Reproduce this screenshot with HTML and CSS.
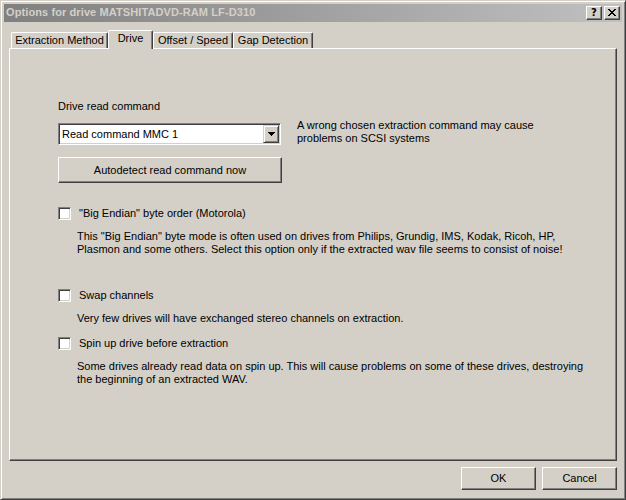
FILE: index.html
```html
<!DOCTYPE html>
<html>
<head>
<meta charset="utf-8">
<title>Options</title>
<link rel="stylesheet" href="styles.css">
</head>
<body>
<div class="window">
  <div class="titlebar">
    <span class="title">Options for drive MATSHITADVD-RAM LF-D310</span>
    <div class="tb-buttons">
      <span class="tb-btn help">?</span>
      <span class="tb-btn close">
        <svg width="8" height="7" viewBox="0 0 8 7" shape-rendering="crispEdges">
          <rect x="0" y="0" width="2" height="1"/><rect x="6" y="0" width="2" height="1"/>
          <rect x="1" y="1" width="2" height="1"/><rect x="5" y="1" width="2" height="1"/>
          <rect x="2" y="2" width="4" height="1"/>
          <rect x="3" y="3" width="2" height="1"/>
          <rect x="2" y="4" width="4" height="1"/>
          <rect x="1" y="5" width="2" height="1"/><rect x="5" y="5" width="2" height="1"/>
          <rect x="0" y="6" width="2" height="1"/><rect x="6" y="6" width="2" height="1"/>
        </svg>
      </span>
    </div>
  </div>
  <div class="dialog">
    <div class="tabs">
      <div class="tab tab-extraction">Extraction Method</div>
      <div class="tab tab-drive selected">Drive</div>
      <div class="tab tab-offset">Offset / Speed</div>
      <div class="tab tab-gap">Gap Detection</div>
    </div>
    <div class="panel">
      <div class="label">Drive read command</div>
      <div class="cmd-row">
        <div class="cmd-left">
          <div class="combo">
            <span class="combo-text">Read command MMC 1</span>
            <span class="combo-btn">
              <svg width="7" height="4" viewBox="0 0 7 4" shape-rendering="crispEdges">
                <rect x="0" y="0" width="7" height="1"/>
                <rect x="1" y="1" width="5" height="1"/>
                <rect x="2" y="2" width="3" height="1"/>
                <rect x="3" y="3" width="1" height="1"/>
              </svg>
            </span>
          </div>
          <div class="button autodetect">Autodetect read command now</div>
        </div>
        <div class="hint">A wrong chosen extraction command may cause<br>problems on SCSI systems</div>
      </div>

      <div class="check-row cb-endian"><span class="checkbox"></span><span class="check-label">"Big Endian" byte order (Motorola)</span></div>
      <div class="desc desc-endian">This "Big Endian" byte mode is often used on drives from Philips, Grundig, IMS, Kodak, Ricoh, HP,<br>Plasmon and some others. Select this option only if the extracted wav file seems to consist of noise!</div>

      <div class="check-row cb-swap"><span class="checkbox"></span><span class="check-label">Swap channels</span></div>
      <div class="desc desc-swap">Very few drives will have exchanged stereo channels on extraction.</div>

      <div class="check-row cb-spin"><span class="checkbox"></span><span class="check-label">Spin up drive before extraction</span></div>
      <div class="desc desc-spin">Some drives already read data on spin up. This will cause problems on some of these drives, destroying<br>the beginning of an extracted WAV.</div>
    </div>
    <div class="actions">
      <div class="button action">OK</div>
      <div class="button action">Cancel</div>
    </div>
  </div>
</div>
</body>
</html>
```

FILE: styles.css
```css
* { box-sizing: border-box; }
html, body { margin: 0; padding: 0; }
body {
  background: #d4d0c8;
  font-family: "Liberation Sans", Arial, sans-serif;
  font-size: 11px;
  line-height: 13px;
  color: #000;
}
.window {
  width: 626px;
  height: 500px;
  border: 1px solid;
  border-color: #d4d0c8 #404040 #404040 #d4d0c8;
  box-shadow: inset 1px 1px #fff, inset -1px -1px #808080;
  padding: 3px;
  background: #d4d0c8;
}
.titlebar {
  height: 18px;
  display: flex;
  justify-content: space-between;
  align-items: flex-start;
  padding: 2px 2px 0 2px;
  background: linear-gradient(to right, #808080, #c0c0c0);
}
.title {
  font-weight: bold;
  color: #d4d0c8;
  line-height: 12px;
  letter-spacing: 0.1px;
  white-space: nowrap;
}
.tb-buttons { display: flex; }
.tb-btn {
  width: 16px;
  height: 14px;
  background: #d4d0c8;
  border-top: 1px solid #fff;
  border-left: 1px solid #fff;
  border-right: 1px solid #404040;
  border-bottom: 1px solid #404040;
  box-shadow: inset -1px -1px #808080;
  display: flex;
  align-items: center;
  justify-content: center;
}
.help {
  margin-right: 2px;
  font-family: "DejaVu Sans", sans-serif;
  font-weight: bold;
  font-size: 10px;
  line-height: 10px;
  padding-bottom: 1px;
}
.close svg { display: block; fill: #000; margin-right: 1px; margin-bottom: 1px; }

.dialog { padding: 8px 5px 0 5px; }
.tabs {
  display: flex;
  align-items: flex-end;
  height: 18px;
  padding-left: 2px;
  position: relative;
  z-index: 1;
}
.tab {
  height: 16px;
  border-top: 1px solid #fff;
  border-left: 1px solid #fff;
  border-right: 1px solid #404040;
  box-shadow: inset -1px 0 #808080;
  border-radius: 2px 2px 0 0;
  text-align: center;
  padding-top: 1px;
  white-space: nowrap;
  background: #d4d0c8;
}
.tab-extraction { width: 97px; }
.tab-drive { width: 45px; }
.tab-offset { width: 80px; }
.tab-gap { width: 80px; }
.tab.selected {
  height: 19px;
  margin-bottom: -1px;
}

.panel {
  height: 413px;
  border-top: 1px solid #fff;
  border-left: 1px solid #fff;
  border-right: 1px solid #404040;
  border-bottom: 1px solid #404040;
  box-shadow: inset -1px -1px #808080;
  padding: 51px 0 0 48px;
}
.label { margin-bottom: 10px; }
.cmd-row { display: flex; align-items: flex-start; }
.cmd-left {
  width: 224px;
  display: flex;
  flex-direction: column;
  gap: 12px;
}
.combo {
  width: 223px;
  height: 22px;
  background: #fff;
  border: 1px solid;
  border-color: #808080 #fff #fff #808080;
  box-shadow: inset 1px 1px #404040, inset -1px -1px #d4d0c8;
  padding: 1px 1px 1px 3px;
  display: flex;
  align-items: center;
  justify-content: space-between;
}
.combo-text { white-space: nowrap; }
.combo-btn {
  width: 16px;
  height: 18px;
  background: #d4d0c8;
  border: 1px solid;
  border-color: #d4d0c8 #404040 #404040 #d4d0c8;
  box-shadow: inset 1px 1px #fff, inset -1px -1px #808080;
  display: flex;
  align-items: center;
  justify-content: center;
}
.combo-btn svg { display: block; fill: #000; }
.button {
  background: #d4d0c8;
  border-top: 1px solid #fff;
  border-left: 1px solid #fff;
  border-right: 1px solid #404040;
  border-bottom: 1px solid #404040;
  box-shadow: inset -1px -1px #808080;
  display: flex;
  align-items: center;
  justify-content: center;
  white-space: nowrap;
}
.autodetect { width: 224px; height: 26px; }
.hint { margin-left: 15px; margin-top: -4px; white-space: nowrap; }

.check-row {
  display: flex;
  align-items: flex-start;
  gap: 8px;
  height: 13px;
}
.checkbox {
  width: 13px;
  height: 13px;
  flex: none;
  background: #fff;
  border: 1px solid;
  border-color: #808080 #fff #fff #808080;
  box-shadow: inset 1px 1px #404040, inset -1px -1px #d4d0c8;
}
.check-label { white-space: nowrap; }
.desc { padding-left: 19px; white-space: nowrap; }
.cb-endian { margin-top: 24px; }
.desc-endian { margin-top: 10px; }
.cb-swap { margin-top: 33px; }
.desc-swap { margin-top: 10px; }
.cb-spin { margin-top: 12px; }
.desc-spin { margin-top: 10px; }

.actions {
  display: flex;
  justify-content: flex-end;
  gap: 6px;
  margin-top: 6px;
}
.action { width: 75px; height: 23px; }
```
